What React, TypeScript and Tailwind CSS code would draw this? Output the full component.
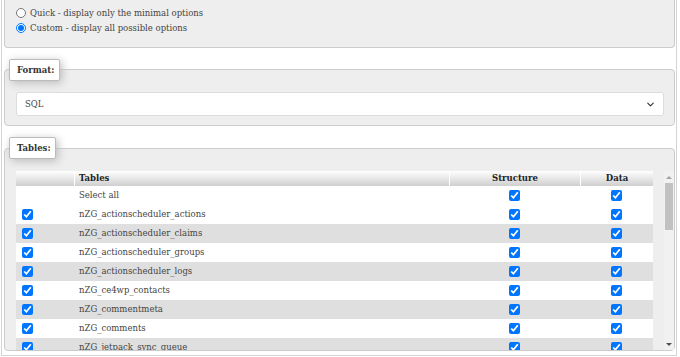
import { ChevronDown } from "lucide-react";

const tables = [
  "nZG_actionscheduler_actions",
  "nZG_actionscheduler_claims",
  "nZG_actionscheduler_groups",
  "nZG_actionscheduler_logs",
  "nZG_ce4wp_contacts",
  "nZG_commentmeta",
  "nZG_comments",
  "nZG_jetpack_sync_queue",
  "nZG_links",
];

function Legend({ label, width }: { label: string; width: string }) {
  return (
    <div
      className={`ml-[4px] ${width} h-[22px] flex items-center px-[7px] bg-white border border-[#bbb] rounded-[2px] shadow-[2px_2px_8px_#bbb] font-bold text-[#333]`}
    >
      {label}
    </div>
  );
}

function Check() {
  return <input type="checkbox" defaultChecked className="w-[11px] h-[11px] m-0 block" />;
}

export default function App() {
  return (
    <div className="w-[680px] h-[357px] bg-white overflow-hidden font-['DejaVu_Serif',serif] text-[8.5px] text-[#444]">
      <div className="ml-px w-[676px] h-[356px] border-x border-b border-[#d4d4d4] px-px flex flex-col">
        {/* export method */}
        <div className="ml-px w-[671px] h-[48px] shrink-0 bg-[#eee] border-x border-b border-[#ccc] rounded-b-[4px] pl-[11px] pt-[8px] flex flex-col gap-[5px]">
          <label className="flex items-center gap-[4px] h-[10px]">
            <input type="radio" name="method" className="w-[10px] h-[10px] m-0" />
            Quick - display only the minimal options
          </label>
          <label className="flex items-center gap-[4px] h-[10px]">
            <input type="radio" name="method" defaultChecked className="w-[10px] h-[10px] m-0" />
            Custom - display all possible options
          </label>
        </div>

        {/* format */}
        <div className="ml-px mt-[21px] w-[671px] h-[57px] shrink-0 bg-[#eee] border border-[#ccc] rounded-[4px] flex flex-col">
          <div className="-mt-[11px]">
            <Legend label="Format:" width="w-[51px]" />
          </div>
          <div className="ml-[11px] mt-[11px] w-[648px] h-[24px] bg-white border border-[#ddd] rounded-[3px] flex items-center justify-between pl-[8px] pr-[7px]">
            <span>SQL</span>
            <ChevronDown className="w-[11px] h-[11px] text-[#333]" strokeWidth={2.5} />
          </div>
        </div>

        {/* tables */}
        <div className="ml-px mt-[22px] w-[671px] h-[203px] shrink-0 bg-[#eee] border border-[#ccc] rounded-[4px] flex flex-col">
          <div className="-mt-[12px]">
            <Legend label="Tables:" width="w-[47px]" />
          </div>
          <div className="mt-[12px] pl-[11px] flex flex-1 min-h-0 overflow-hidden">
            <div className="w-[637px] overflow-hidden">
              <div className="flex h-[15px] bg-gradient-to-b from-white to-[#cfcfcf] font-bold text-[#222]">
                <div className="w-[58px]" />
                <div className="w-[375px] border-l border-white pl-[4px] flex items-center">Tables</div>
                <div className="w-[131px] border-l border-white flex items-center justify-center">Structure</div>
                <div className="w-[73px] border-l border-white flex items-center justify-center">Data</div>
              </div>
              <div className="flex h-[19px] bg-white items-center">
                <div className="w-[58px]" />
                <div className="w-[375px] pl-[5px]">Select all</div>
                <div className="w-[131px] flex justify-center"><Check /></div>
                <div className="w-[73px] flex justify-center"><Check /></div>
              </div>
              {tables.map((t, i) => (
                <div
                  key={t}
                  className={`flex h-[19px] items-center ${i % 2 === 1 ? "bg-[#dfdfdf]" : "bg-white"}`}
                >
                  <div className="w-[58px] pl-[6px]"><Check /></div>
                  <div className="w-[375px] pl-[5px]">{t}</div>
                  <div className="w-[131px] flex justify-center"><Check /></div>
                  <div className="w-[73px] flex justify-center"><Check /></div>
                </div>
              ))}
            </div>
            <div className="ml-[11px] w-[10px] bg-[#f1f1f1] flex flex-col items-center">
              <div className="h-[12px] flex items-center justify-center">
                <div className="w-0 h-0 border-x-[3px] border-x-transparent border-b-[3px] border-b-[#a3a3a3]" />
              </div>
              <div className="w-[8px] h-[47px] bg-[#c1c1c1]" />
              <div className="flex-1" />
              <div className="h-[12px] flex items-center justify-center">
                <div className="w-0 h-0 border-x-[3px] border-x-transparent border-t-[3px] border-t-[#505050]" />
              </div>
            </div>
          </div>
        </div>
      </div>
    </div>
  );
}
